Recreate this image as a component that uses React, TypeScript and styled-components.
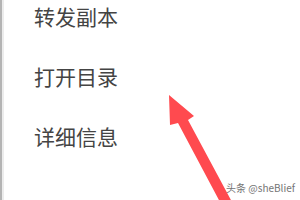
import styled, { createGlobalStyle } from "styled-components";

const GlobalStyle = createGlobalStyle`
  html, body {
    margin: 0;
    padding: 0;
    background: #ffffff;
  }
`;

const Screen = styled.div`
  position: relative;
  width: 300px;
  height: 200px;
  overflow: hidden;
  background: #ffffff;
  box-sizing: border-box;
  border-left: 2px solid #b4b4b4;
  box-shadow: inset 2px 0 0 #ececec;
`;

const Menu = styled.ul`
  list-style: none;
  margin: 0;
  padding: 1px 0 0 32px;
  display: flex;
  flex-direction: column;
  gap: 30px;
`;

const MenuItem = styled.li`
  height: 30px;
  line-height: 30px;
  font-family: "Noto Sans CJK SC", "Noto Sans", sans-serif;
  font-size: 21px;
  font-weight: 400;
  color: #444444;
  letter-spacing: 0;
`;

const Arrow = styled.svg`
  position: absolute;
  left: 0;
  top: 0;
  pointer-events: none;
`;

const Watermark = styled.span`
  position: absolute;
  right: 5px;
  bottom: 5px;
  font-family: "Noto Sans CJK SC", "Noto Sans", sans-serif;
  font-size: 10px;
  color: #666666;
  opacity: 0.9;
`;

const items = ["转发副本", "打开目录", "详细信息"];

function App() {
  return (
    <>
      <GlobalStyle />
      <Screen>
        <Menu>
          {items.map((label) => (
            <MenuItem key={label}>{label}</MenuItem>
          ))}
        </Menu>
        <Arrow width="300" height="200" viewBox="0 0 300 200">
          <polygon
            points="167,95 192,116 186,120 230,202 218,202 176,123 168,125"
            fill="#ff4a4f"
          />
        </Arrow>
        <Watermark>头条 @sheBlief</Watermark>
      </Screen>
    </>
  );
}

export default App;
